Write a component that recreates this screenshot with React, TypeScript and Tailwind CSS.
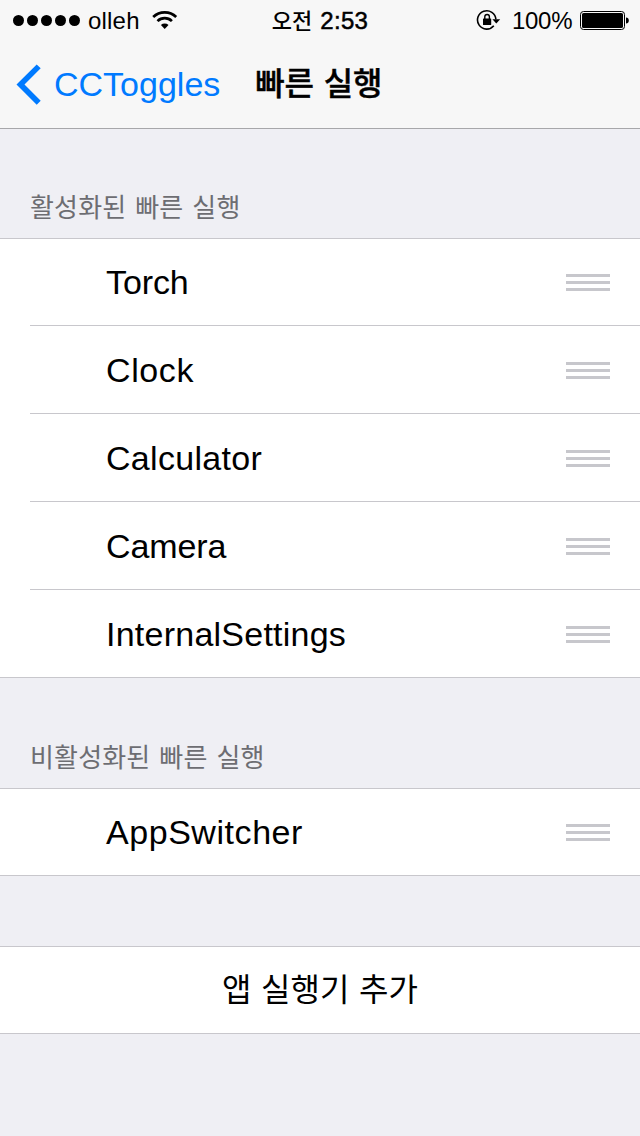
const FONT = "font-['Liberation_Sans','Noto_Sans_CJK_KR',sans-serif]";

function StatusBar() {
  return (
    <div className="flex h-11 items-start text-black">
      <div className="flex flex-1 items-start pl-[13px]">
        <svg className="mt-[14px] h-3 w-[67px] shrink-0" viewBox="0 0 67 12">
          {[5.5, 19.5, 33.5, 47.5, 61.5].map((x) => (
            <circle key={x} cx={x} cy="6.5" r="5.5" />
          ))}
        </svg>
        <span className="ml-[8px] mt-[6px] text-[24px] leading-[30px] tracking-[0.2px]">olleh</span>
        <svg className="ml-[12px] mt-[10px] h-5 w-[26px] shrink-0" viewBox="0 0 26 20" fill="none" stroke="#000" strokeWidth="2.7">
          <path d="M1.2 7a16.4 16.4 0 0 1 23 0" />
          <path d="M5.5 11.1a10.4 10.4 0 0 1 14.4 0" />
          <path d="M8.9 15a5.6 5.6 0 0 1 7.6 0L12.7 18.9z" fill="#000" stroke="none" />
        </svg>
      </div>
      <div className="-ml-[2px] mt-[6px] flex text-[24px] leading-[30px]">
        <span className="-mt-[2px] font-['Noto_Sans_CJK_KR',sans-serif] text-[22px] font-medium">오전</span>
        <span className="ml-[8px] tracking-[0.3px] [-webkit-text-stroke:0.5px_black]">2:53</span>
      </div>
      <div className="flex flex-1 items-start justify-end pr-[11px]">
        <svg className="mt-[9px] h-[22px] w-[25px] shrink-0" viewBox="0 0 25 22">
          <path d="M17.8 16.8A9.2 9.2 0 1 1 19.9 10.4" fill="none" stroke="#000" strokeWidth="1.6" />
          <path d="M16.4 10.2h7.8L20.3 14.4z" />
          <rect x="7" y="9.4" width="8.2" height="6.6" rx="0.6" />
          <path d="M8.8 10V7.8a2.3 2.3 0 0 1 4.6 0V10" fill="none" stroke="#000" strokeWidth="1.4" />
        </svg>
        <span className="ml-[11px] mt-[6px] w-[60px] text-[24px] leading-[30px] tracking-[-0.3px]">100%</span>
        <svg className="ml-[8px] mt-[10px] h-5 w-[49px] shrink-0" viewBox="0 0 49 20">
          <rect x="0.5" y="1.5" width="44" height="18" rx="3" fill="none" stroke="#000" />
          <rect x="2" y="3" width="41" height="15" rx="1.6" />
          <path d="M46 7.4c1.8 0 2.8 1.2 2.8 3s-1 3-2.8 3z" />
        </svg>
      </div>
    </div>
  );
}

function NavBar() {
  return (
    <div className="flex h-[84px] items-start pl-4">
      <svg className="mt-5 h-[42px] w-[26px] shrink-0" viewBox="0 0 26 42">
        <path d="M20.7 0.4L0.5 20.5L20.7 40.7L24.7 36.8L8.5 20.5L24.7 4.3z" fill="#007aff" />
      </svg>
      <span className="ml-[12px] mt-5 text-[34px] leading-10 text-[#007aff]">CCToggles</span>
      <h1 className="ml-[35px] mt-[17px] font-['Noto_Sans_CJK_KR',sans-serif] text-[32px] leading-10 font-medium tracking-[-0.2px] text-black [word-spacing:3px] [-webkit-text-stroke:0.4px_black]">
        빠른 실행
      </h1>
    </div>
  );
}

function Handle({ className }: { className: string }) {
  return (
    <div className={`${className} flex w-11 flex-col gap-1`}>
      <div className="h-[3px] bg-[#c7c7cc]" />
      <div className="h-[3px] bg-[#c7c7cc]" />
      <div className="h-[3px] bg-[#c7c7cc]" />
    </div>
  );
}

type Item = { label: string; tracking: string };

function Row({ item, first, last }: { item: Item; first: boolean; last: boolean }) {
  const height = first && last ? "h-[86px]" : first || last ? "h-[87px]" : "h-[88px]";
  const border = last ? "" : "border-b border-[#c8c7cc]";
  return (
    <li className={`${height} pl-[30px]`}>
      <div className={`${border} flex h-full items-center justify-between pr-[30px] pl-[76px]`}>
        <span className={`${item.tracking} text-[34px] leading-10`}>{item.label}</span>
        <Handle className={first ? "" : "mt-[2px]"} />
      </div>
    </li>
  );
}

function Section({ title, items, className }: { title: string; items: Item[]; className: string }) {
  return (
    <section>
      <h2
        className={`${className} flex items-end pb-[12px] pl-[30px] font-['Noto_Sans_CJK_KR',sans-serif] text-[26px] leading-10 tracking-[0.15px] text-[#6d6d72] [word-spacing:3px]`}
      >
        {title}
      </h2>
      <ul className="border-y border-[#c8c7cc] bg-white">
        {items.map((item, i) => (
          <Row key={item.label} item={item} first={i === 0} last={i === items.length - 1} />
        ))}
      </ul>
    </section>
  );
}

const enabled: Item[] = [
  { label: "Torch", tracking: "tracking-[-0.1px]" },
  { label: "Clock", tracking: "tracking-[0.6px]" },
  { label: "Calculator", tracking: "tracking-[0.3px]" },
  { label: "Camera", tracking: "tracking-[-0.1px]" },
  { label: "InternalSettings", tracking: "tracking-[0.24px]" },
];

const disabled: Item[] = [{ label: "AppSwitcher", tracking: "tracking-[0.55px]" }];

export default function App() {
  return (
    <div className={`${FONT} h-[1136px] w-[640px] overflow-hidden bg-[#efeff4] text-black`}>
      <header className="border-b border-[#a7a7aa] bg-[#f7f7f7]">
        <StatusBar />
        <NavBar />
      </header>
      <main>
        <Section title="활성화된 빠른 실행" items={enabled} className="h-[109px]" />
        <Section title="비활성화된 빠른 실행" items={disabled} className="h-[110px]" />
        <button className="mt-[70px] flex h-[88px] w-full items-center justify-center border-y border-[#c8c7cc] bg-white pb-[6px] font-['Noto_Sans_CJK_KR',sans-serif] text-[32px] [word-spacing:2.5px]">
          앱 실행기 추가
        </button>
      </main>
    </div>
  );
}
